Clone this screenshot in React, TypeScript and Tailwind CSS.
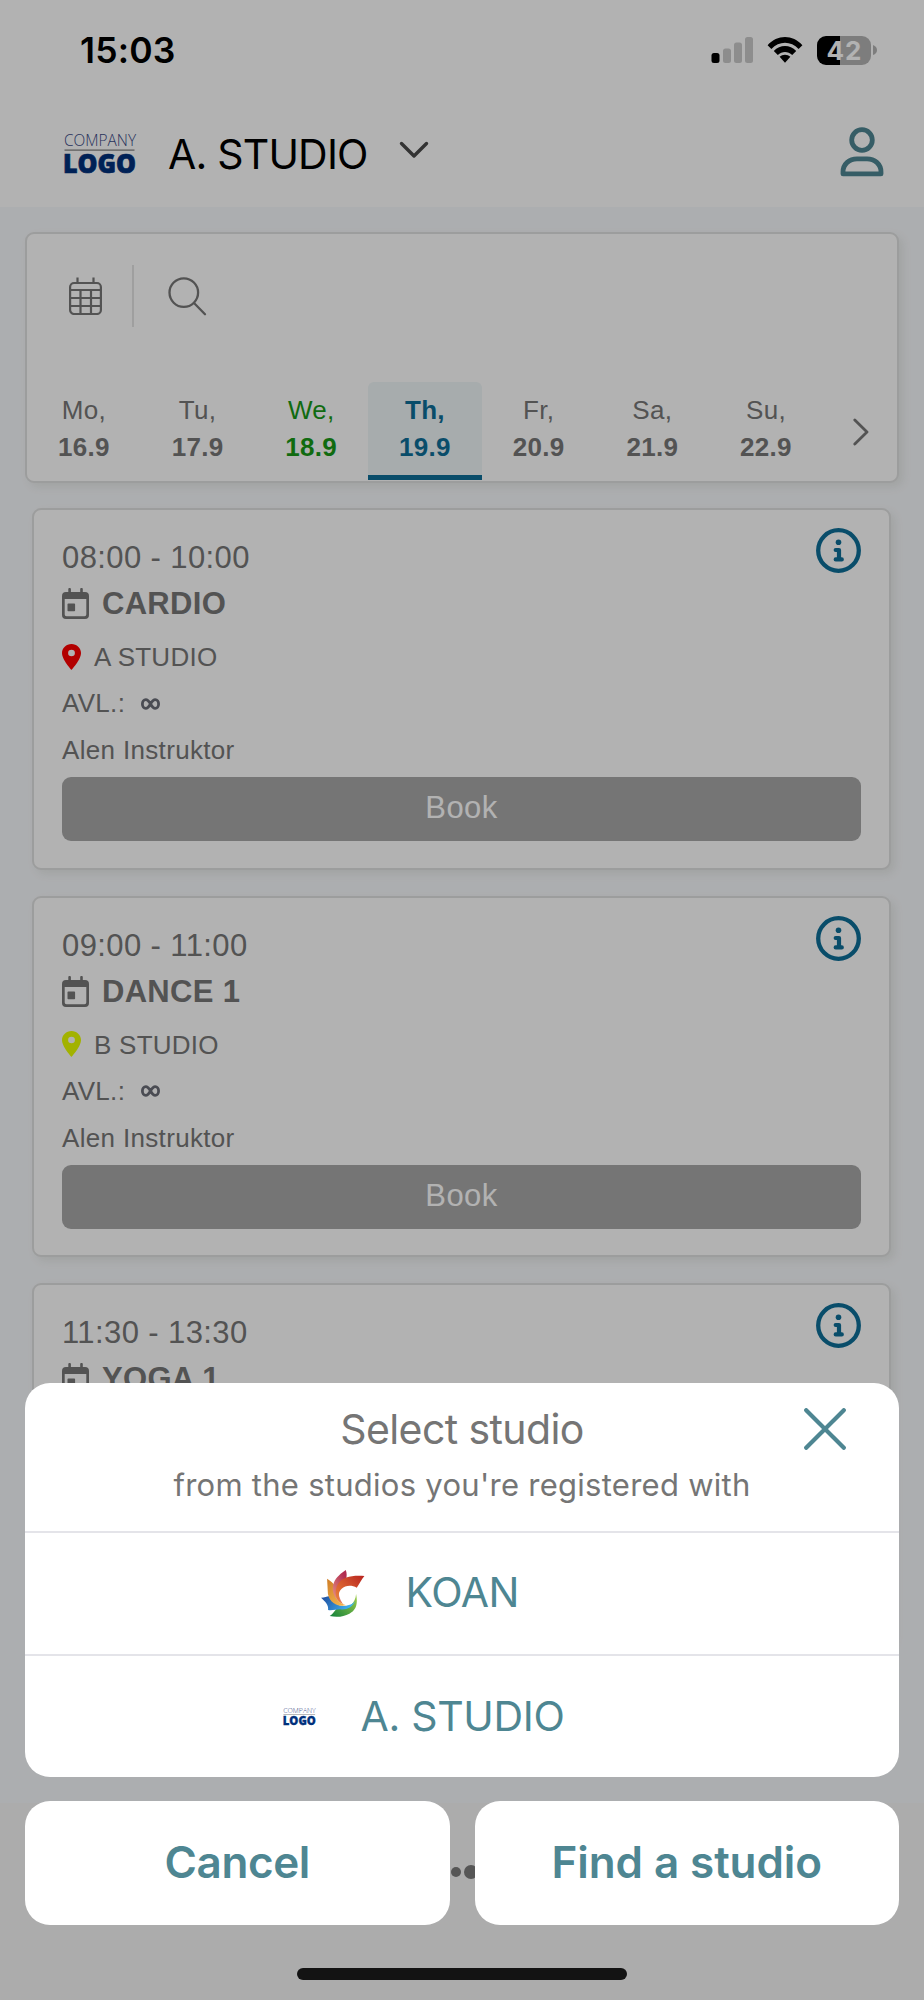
/**
 * Class schedule screen with the studio picker sheet open
 */
import React from 'react';

interface Day {
  name: string;
  date: string;
  state?: 'today' | 'selected';
}

interface StudioClass {
  time: string;
  title: string;
  location: string;
  pinColor: string;
  instructor: string;
}

const days: Day[] = [
  { name: 'Mo,', date: '16.9' },
  { name: 'Tu,', date: '17.9' },
  { name: 'We,', date: '18.9', state: 'today' },
  { name: 'Th,', date: '19.9', state: 'selected' },
  { name: 'Fr,', date: '20.9' },
  { name: 'Sa,', date: '21.9' },
  { name: 'Su,', date: '22.9' },
];

const classes: StudioClass[] = [
  { time: '08:00 - 10:00', title: 'CARDIO', location: 'A STUDIO', pinColor: '#ff0000', instructor: 'Alen Instruktor' },
  { time: '09:00 - 11:00', title: 'DANCE 1', location: 'B STUDIO', pinColor: '#e9ff00', instructor: 'Alen Instruktor' },
  { time: '11:30 - 13:30', title: 'YOGA 1', location: 'A STUDIO', pinColor: '#ff0000', instructor: 'Alen Instruktor' },
];

export default function App() {
  return (
    <div className="relative flex h-[2000px] w-[924px] flex-col overflow-hidden bg-[#f7f9fc] font-['Liberation_Sans',Arial,sans-serif] text-[#777777]">
      <div className="h-[207px] shrink-0 bg-white font-['Inter',sans-serif] text-black">
        <StatusBar />
        <Header />
      </div>

      <div className="flex h-[1596px] shrink-0 flex-col overflow-hidden">
        <FilterCard />
        <div className="mt-[25.5px] flex flex-col gap-[26px] pr-[33px] pl-[32px]">
          {classes.map(item => (
            <ClassCard key={item.time} item={item} />
          ))}
        </div>
      </div>

      {/* Tab bar, mostly hidden behind the sheet */}
      <div className="flex flex-1 items-start justify-center bg-[#f7f7f7] pt-[62px]">
        <div className="flex items-center gap-[3px] pl-[5px]">
          <span className="h-[10px] w-[10px] rounded-full bg-[#7b7b7b]"></span>
          <span className="h-[14px] w-[14px] rounded-full bg-[#7b7b7b]"></span>
        </div>
      </div>

      <div className="absolute inset-0 bg-black/30"></div>
      <StudioSheet />
    </div>
  );
}

function StatusBar() {
  return (
    <div className="flex h-[100px] items-center justify-between pr-[47px] pl-[80px]">
      <span className="pt-[1px] text-[35.5px] leading-[100px] font-semibold tracking-[0.2px]">15:03</span>
      <div className="flex items-center">
        <svg className="h-[28px] w-[43px]" viewBox="0 0 43 28">
          <rect x="0.5" y="17" width="8" height="10" rx="2.5" fill="#000" />
          <rect x="12" y="12.5" width="8" height="14.5" rx="2.5" fill="#cacaca" />
          <rect x="23" y="6.5" width="8" height="20.5" rx="2.5" fill="#cacaca" />
          <rect x="34" y="1" width="8" height="26" rx="2.5" fill="#cacaca" />
        </svg>
        <svg className="ml-[13px] h-[28px] w-[36px]" viewBox="0 0 36 28">
          <path d="M0.6 9.3 C10 -1.8 26 -1.8 35.4 9.3 L31.6 12.9 C24 4.8 12 4.8 4.4 12.9 Z" fill="#000" />
          <path d="M6.8 15 C13 8.2 23 8.2 29.2 15 L25.2 19 C21 15 15 15 10.8 19 Z" fill="#000" />
          <path d="M12.6 20.8 C15.6 18 20.4 18 23.4 20.8 L18 26.8 Z" fill="#000" />
        </svg>
        <div className="ml-[14px] flex h-[29px] w-[54px] items-center justify-center gap-[1px] rounded-[9px] bg-[linear-gradient(90deg,#000_42%,#b4b4b4_42%)] text-[26px] leading-[29px] font-bold text-white">
          <span>4</span>
          <span>2</span>
        </div>
        <svg className="ml-[2px] h-[10px] w-[4px]" viewBox="0 0 4 10">
          <path d="M0 0 Q4 1.5 4 5 Q4 8.5 0 10 Z" fill="#b4b4b4" />
        </svg>
      </div>
    </div>
  );
}

function Header() {
  return (
    <div className="flex h-[107px] items-center pr-[40px] pl-[64px]">
      <CompanyLogo />
      <span className="ml-[32px] pt-[1px] text-[41px] leading-[107px] tracking-[-0.8px]">A. STUDIO</span>
      <svg className="mt-[-8px] ml-[31px] h-[18px] w-[30px]" viewBox="0 0 30 18" fill="none">
        <path d="M2.5 2.5 L15 15 L27.5 2.5" stroke="#4a4a4a" strokeWidth="3.4" strokeLinecap="round" strokeLinejoin="round" />
      </svg>
      <svg className="mt-[-3px] ml-auto h-[50px] w-[44px]" viewBox="0 0 44 50" fill="none" stroke="#4e8692" strokeWidth="4.8">
        <circle cx="22" cy="13" r="10.3" />
        <path d="M3 46.9 V45 C3 37 9.5 31.8 17 31.8 H27 C34.5 31.8 41 37 41 45 V46.9 Z" strokeLinejoin="round" />
      </svg>
    </div>
  );
}

function CompanyLogo({ small = false }: { small?: boolean }) {
  return (
    <svg
      className={small ? 'h-[19px] w-[33px] overflow-visible' : 'h-[42px] w-[72px] overflow-visible'}
      viewBox="0 0 72 42"
      fontFamily="'Open Sans', sans-serif"
    >
      <text x="0" y="12.7" fontSize="16.5" fontWeight="300" fill="#3a4a86" textLength="72" lengthAdjust="spacingAndGlyphs">
        COMPANY
      </text>
      <rect x="0.5" y="16.5" width="70" height="1.2" fill="#7d7d7d" />
      <text x="-1" y="40.2" fontSize="26" fontWeight="800" fill="#00307c" stroke="#00307c" strokeWidth="0.7" textLength="73" lengthAdjust="spacingAndGlyphs">
        LOGO
      </text>
    </svg>
  );
}

function FilterCard() {
  return (
    <div className="mt-[25px] ml-[25px] flex h-[250.5px] w-[874px] shrink-0 flex-col rounded-[9px] border-2 border-[#e0e1e1] bg-white shadow-[4px_4px_8px_rgba(120,130,100,0.12)]">
      <div className="flex h-[124px] items-center pl-[42px]">
        <svg className="h-[38px] w-[33px]" viewBox="0 0 33 38" fill="none" stroke="#777777" strokeWidth="2.2">
          <rect x="1.1" y="6" width="30.8" height="31" rx="4" />
          <path d="M8.5 0.5 V6 M24.5 0.5 V6 M1 13 H32 M1 21 H32 M1 29 H32 M11.5 13 V37 M22 13 V37" />
        </svg>
        <div className="ml-[30px] h-[62px] w-[2px] bg-[#e4e4e4]"></div>
        <svg className="ml-[34px] h-[39px] w-[39px]" viewBox="0 0 39 39" fill="none" stroke="#777777" strokeWidth="2.3">
          <circle cx="15.8" cy="15.6" r="14.3" />
          <path d="M26 26 L37 37.2" strokeLinecap="round" />
        </svg>
      </div>

      <div className="mt-[24px] flex h-[98px]">
        {days.map(day => (
          <DayTab key={day.name} day={day} />
        ))}
        <svg className="mt-[36px] ml-[30px] h-[28px] w-[16px]" viewBox="0 0 16 28" fill="none">
          <path d="M1.8 2 L14 14 L1.8 26" stroke="#777777" strokeWidth="2.8" strokeLinecap="round" strokeLinejoin="round" />
        </svg>
      </div>
    </div>
  );
}

function DayTab({ day }: { day: Day }) {
  const stateClasses = {
    today: 'border-transparent text-[#189a18]',
    selected: 'border-[#0e6f99] bg-[#eff6f8] font-bold text-[#0e6f99]',
  };

  return (
    <div
      className={`flex w-[113.7px] shrink-0 flex-col items-center rounded-t-[6px] border-b-5 pt-[10px] text-[26px] leading-[36.5px] tracking-[0.3px] ${
        day.state ? stateClasses[day.state] : 'border-transparent'
      }`}
    >
      <span>{day.name}</span>
      <span className="font-bold">{day.date}</span>
    </div>
  );
}

function ClassCard({ item }: { item: StudioClass }) {
  return (
    <div className="flex h-[361.5px] shrink-0 flex-col rounded-[9px] border-2 border-[#e0e1e1] bg-white pt-[23px] pr-[28px] pl-[28px] text-[26px] shadow-[4px_4px_8px_rgba(120,130,100,0.12)]">
      <div className="flex h-[48px] justify-between text-[31px] leading-[49px]">
        <span className="tracking-[0.4px]">{item.time}</span>
        <svg className="mt-[-5px] h-[45px] w-[45px]" viewBox="0 0 45 45" fill="none" stroke="#0e6f99">
          <circle cx="22.5" cy="22.5" r="20.3" strokeWidth="4.3" />
          <circle cx="22.5" cy="14.2" r="2.8" fill="#0e6f99" stroke="none" />
          <path d="M19.7 22 H23 V31.4 M19.7 31.4 H25.8" strokeWidth="4.2" strokeLinecap="round" strokeLinejoin="round" />
        </svg>
      </div>

      <div className="flex h-[45px] items-center text-[31px] leading-[45px] font-bold">
        <svg className="h-[31px] w-[27px]" viewBox="0 0 27 31" fill="#777777">
          <path d="M4 4 H23 A4 4 0 0 1 27 8 V27 A4 4 0 0 1 23 31 H4 A4 4 0 0 1 0 27 V8 A4 4 0 0 1 4 4 Z M2.7 11 V26.5 Q2.7 28.3 4.5 28.3 H22.5 Q24.3 28.3 24.3 26.5 V11 Z" fillRule="evenodd" />
          <rect x="6.3" y="0" width="2.6" height="6" rx="1" />
          <rect x="18.2" y="0" width="2.6" height="6" rx="1" />
          <rect x="5.5" y="15.6" width="7.6" height="7.6" rx="0.8" />
        </svg>
        <span className="ml-[13px] tracking-[0.3px]">{item.title}</span>
      </div>

      <div className="mt-2 flex h-[46px] items-center leading-[46px]">
        <svg className="mt-[-1px] h-[26px] w-[19px]" viewBox="5 2 14 20" preserveAspectRatio="none" fill={item.pinColor}>
          <path d="M12 2C8.13 2 5 5.13 5 9c0 5.25 7 13 7 13s7-7.75 7-13c0-3.87-3.13-7-7-7zm0 9.5a2.5 2.5 0 1 1 0-5 2.5 2.5 0 0 1 0 5z" />
        </svg>
        <span className="ml-[13px] tracking-[0.25px]">{item.location}</span>
      </div>

      <div className="flex h-[47px] items-center leading-[47px]">
        <span className="tracking-[0.3px]">AVL.:</span>
        <svg className="ml-[16px] h-[12px] w-[19px]" viewBox="0 0 19 12" fill="none" stroke="#6b6d78" strokeWidth="2.8">
          <path d="M9.5 6 C7.8 3 6.6 1.6 4.8 1.6 A3.4 4.4 0 0 0 4.8 10.4 C6.6 10.4 7.8 9 9.5 6 C11.2 3 12.4 1.6 14.2 1.6 A3.4 4.4 0 0 1 14.2 10.4 C12.4 10.4 11.2 9 9.5 6 Z" />
        </svg>
      </div>

      <span className="h-[46px] leading-[46px] tracking-[0.33px]">{item.instructor}</span>

      <button className="mt-1 h-[64px] rounded-[9px] bg-[#a8a8a8] pb-[2px] text-[31px] leading-[62px] tracking-[0.4px] text-white">Book</button>
    </div>
  );
}

function StudioSheet() {
  return (
    <div className="absolute inset-x-[25px] top-[1382.5px] font-['Inter',sans-serif] text-[#4e8692]">
      <div className="flex flex-col overflow-hidden rounded-[25px] bg-white">
        <div className="relative h-[148px] text-center text-[#757575]">
          <div className="pt-[20px] text-[41px] leading-[52px] tracking-[-0.6px]">Select studio</div>
          <div className="pt-[8px] text-[31px] leading-[44px] tracking-[0.27px]">from the studios you're registered with</div>
          <svg className="absolute top-[25px] right-[53px] h-[42px] w-[42px]" viewBox="0 0 42 42" fill="none">
            <path d="M2.2 2.2 L39.8 39.8 M39.8 2.2 L2.2 39.8" stroke="#4e8692" strokeWidth="4.2" strokeLinecap="round" />
          </svg>
        </div>

        <div className="flex h-[123px] items-center justify-center border-t-[2.5px] border-[#e4e4e9] pr-[84px] text-[41px]">
          <KoanLogo />
          <span className="ml-[41px] tracking-[-0.5px]">KOAN</span>
        </div>

        <div className="flex h-[123.5px] items-center justify-center border-t-[2.5px] border-[#e4e4e9] pr-[76px] text-[41px]">
          <CompanyLogo small />
          <span className="ml-[44px] tracking-[-0.3px]">A. STUDIO</span>
        </div>
      </div>

      <div className="mt-[24px] grid grid-cols-2 gap-[25px] text-[44px] leading-[123px] font-semibold">
        <button className="h-[123.5px] rounded-[25px] bg-white tracking-[-0.4px]">Cancel</button>
        <button className="h-[123.5px] rounded-[25px] bg-white tracking-[-0.1px]">Find a studio</button>
      </div>

      {/* Home indicator */}
      <div className="mx-auto mt-[43px] h-[12px] w-[330px] rounded-full bg-[#131313]"></div>
    </div>
  );
}

function KoanLogo() {
  return (
    <svg className="h-[47px] w-[43.5px]" viewBox="277 117 130 141">
      <defs>
        <linearGradient id="koan-red" x1="0" y1="1" x2="1" y2="0">
          <stop offset="0" stopColor="#f08a3c" />
          <stop offset="1" stopColor="#b8231f" />
        </linearGradient>
        <linearGradient id="koan-pink" x1="0" y1="1" x2="0.6" y2="0">
          <stop offset="0" stopColor="#f0a08c" />
          <stop offset="1" stopColor="#b02c50" />
        </linearGradient>
        <linearGradient id="koan-orange" x1="0" y1="0" x2="0.6" y2="1">
          <stop offset="0" stopColor="#cf7d26" />
          <stop offset="1" stopColor="#f0b04a" />
        </linearGradient>
        <linearGradient id="koan-blue" x1="0" y1="0" x2="1" y2="0.3">
          <stop offset="0" stopColor="#1f4a9c" />
          <stop offset="1" stopColor="#3fb2f0" />
        </linearGradient>
        <linearGradient id="koan-green" x1="0" y1="1" x2="1" y2="0">
          <stop offset="0" stopColor="#11803a" />
          <stop offset="1" stopColor="#a4d04a" />
        </linearGradient>
      </defs>
      <path d="M303 255 C314 248 316 240 326 230 C352 238 380 222 382 189 C388 220 382 238 362 248 C345 257 325 260 303 255 Z" fill="url(#koan-green)" />
      <path d="M277 200 C290 200 296 194 304 196 C312 216 332 228 352 224 C364 223 374 218 379 211 C370 230 352 238 334 235 C322 235 308 240 298 237 C300 222 290 212 277 200 Z" fill="url(#koan-blue)" />
      <path d="M295 143 C306 150 314 156 320 166 C312 190 322 214 352 223 C318 230 296 206 297 180 Z" fill="url(#koan-orange)" />
      <path d="M351 117 C355 127 354 136 352 146 C326 158 322 188 342 218 C312 204 308 174 315 156 C322 138 338 126 351 117 Z" fill="url(#koan-pink)" />
      <path d="M407 135 C398 146 392 158 384 170 C358 156 328 170 330 196 C330 207 336 214 344 219 C320 210 314 182 328 158 C342 138 370 132 407 135 Z" fill="url(#koan-red)" />
    </svg>
  );
}
